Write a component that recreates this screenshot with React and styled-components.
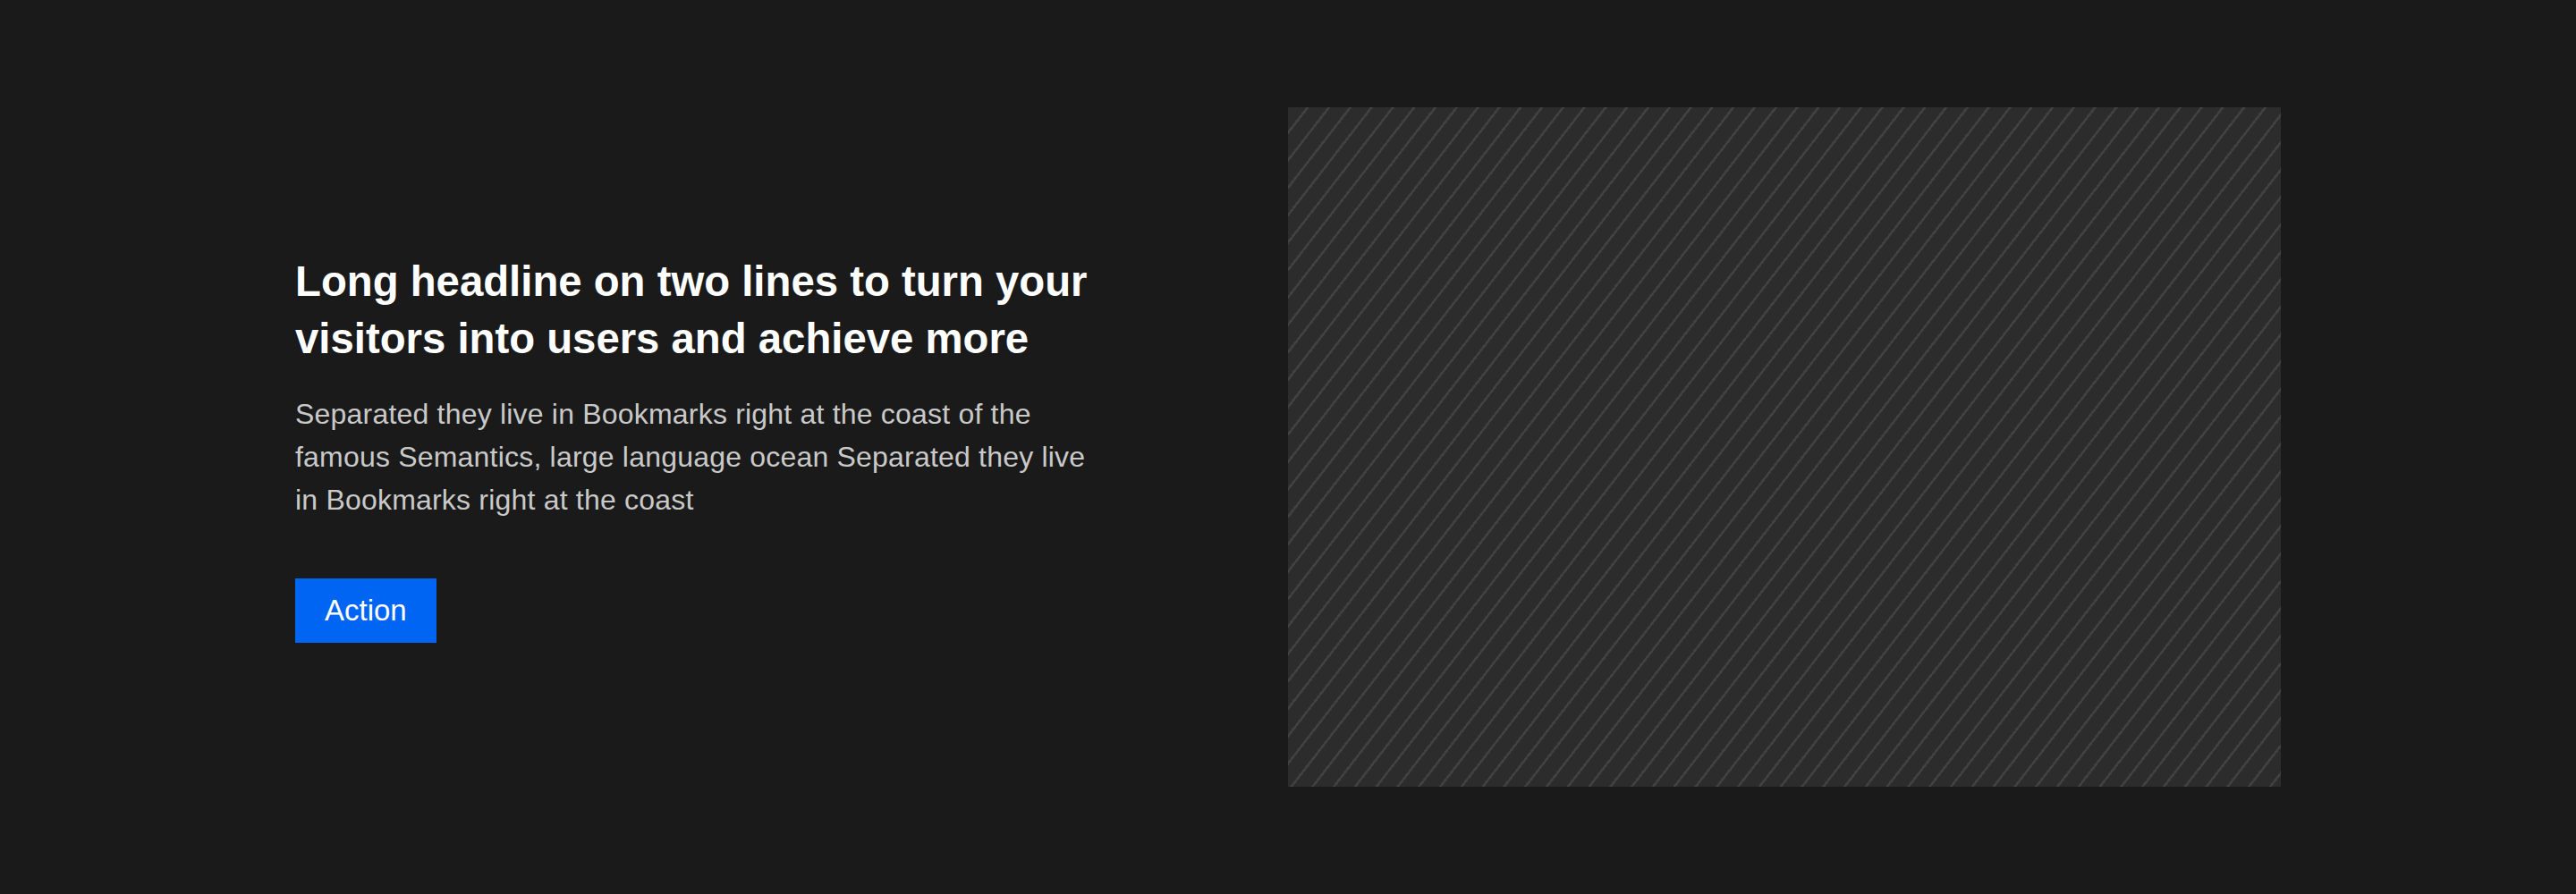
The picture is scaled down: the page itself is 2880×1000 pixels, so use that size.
import React from 'react'
import styled, { createGlobalStyle } from 'styled-components'

const GlobalStyle = createGlobalStyle`
  html, body {
    margin: 0;
    padding: 0;
    background: #1a1a1a;
  }
  * { box-sizing: border-box; }
`

const Page = styled.section`
  height: 100vh;
  width: 100%;
  background: #1a1a1a;
  padding: 120px 330px;
  display: grid;
  grid-template-columns: 1fr 1fr;
  align-items: center;
  font-family: "Liberation Sans", Arial, sans-serif;
`

const TextColumn = styled.div`
  display: flex;
  flex-direction: column;
  align-items: flex-start;
  max-width: 900px;
  padding-top: 2px;
`

const Headline = styled.h2`
  margin: 0;
  color: #ffffff;
  font-size: 47.3px;
  line-height: 64px;
  font-weight: 700;
`

const Body = styled.p`
  margin: 28.6px 0 64px;
  color: #c9c9c9;
  font-size: 32px;
  line-height: 48px;
  letter-spacing: 0.2px;
`

const Button = styled.button`
  height: 72px;
  padding: 0 33px;
  border: none;
  border-radius: 0;
  background: #0065f2;
  color: #ffffff;
  font-family: inherit;
  font-size: 33px;
  font-weight: 500;
  cursor: pointer;
`

const Placeholder = styled.div`
  height: 760px;
  width: 100%;
  background: repeating-linear-gradient(
    127.8deg,
    #2c2c2c 0px,
    #2c2c2c 16.2px,
    #414141 16.2px,
    #414141 18.8px
  );
`

const App = () => (
  <>
    <GlobalStyle />
    <Page>
      <TextColumn>
        <Headline>Long headline on two lines to turn your visitors into users and achieve more</Headline>
        <Body>Separated they live in Bookmarks right at the coast of the famous Semantics, large language ocean Separated they live in Bookmarks right at the coast</Body>
        <Button>Action</Button>
      </TextColumn>
      <Placeholder />
    </Page>
  </>
)

export default App
